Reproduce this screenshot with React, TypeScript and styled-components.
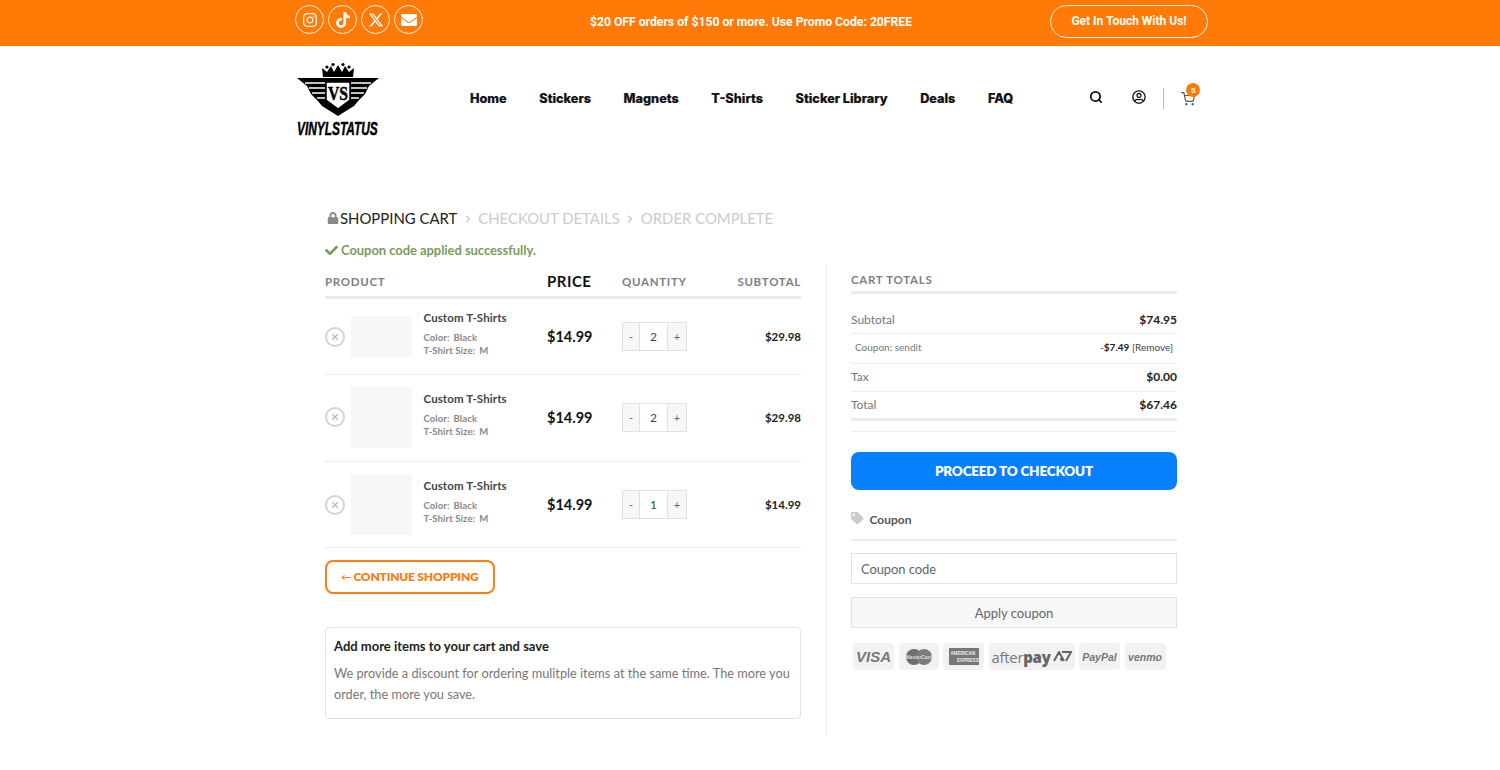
import styled, { createGlobalStyle } from "styled-components";
import { FaInstagram, FaTiktok, FaEnvelope, FaLock, FaCheck, FaTag, FaRegUserCircle } from "react-icons/fa";
import { FaXTwitter } from "react-icons/fa6";
import { FiShoppingCart, FiX, FiChevronRight } from "react-icons/fi";
import { Search } from "lucide-react";

const GlobalStyle = createGlobalStyle`
  html, body { margin: 0; padding: 0; background: #fff; }
  body { font-family: Lato, "Liberation Sans", sans-serif; color: #777; }
  * { box-sizing: border-box; }
`;

const TopBar = styled.div`
  height: 46px;
  background: #ff7a07;
`;
const TopInner = styled.div`
  width: 913px;
  margin-left: 295px;
  height: 38px;
  padding-top: 5px;
  display: flex;
  align-items: flex-start;
  justify-content: space-between;
`;
const Socials = styled.div`
  display: flex;
  gap: 4px;
`;
const Social = styled.a`
  width: 29px;
  height: 29px;
  border: 1px solid #fff0e2;
  border-radius: 50%;
  color: #fff;
  font-size: 16px;
  display: flex;
  align-items: center;
  justify-content: center;
`;
const Promo = styled.div`
  font-family: Roboto, sans-serif;
  font-weight: 700;
  font-size: 12.2px;
  color: #fff;
  line-height: 34px;
  margin-left: 29px;
`;
const TouchButton = styled.a`
  width: 158px;
  height: 33px;
  border: 1px solid #fff0e2;
  border-radius: 17px;
  color: #fff;
  font-family: Roboto, sans-serif;
  font-weight: 700;
  font-size: 12px;
  padding-bottom: 1px;
  display: flex;
  align-items: center;
  justify-content: center;
`;

const Header = styled.header`
  width: 913px;
  margin-left: 295px;
  height: 104px;
  padding-top: 16px;
  display: flex;
  align-items: flex-start;
`;
const LogoWrap = styled.div`
  width: 84px;
  height: 74px;
  margin-left: 2px;
`;
const LogoMark = styled.svg`
  display: block;
  margin-bottom: 1px;
`;
const LogoText = styled.div`
  font-family: "Liberation Sans", sans-serif;
  font-size: 18px;
  font-weight: 700;
  font-style: italic;
  line-height: 15px;
  color: #000;
  -webkit-text-stroke: 0.5px #000;
  white-space: nowrap;
  transform: scaleX(0.66);
  transform-origin: left center;
`;
const Nav = styled.nav`
  display: flex;
  gap: 32.5px;
  margin-left: 89px;
  height: 72px;
  align-items: center;
`;
const NavLink = styled.a`
  font-family: Inter, sans-serif;
  font-weight: 800;
  font-size: 12.7px;
  color: #111;
  -webkit-text-stroke: 0.2px #111;
`;
const HeaderIcons = styled.div`
  margin-left: 76px;
  height: 70px;
  display: flex;
  align-items: center;
  color: #111;
`;
const IconSlot = styled.span<{ $w: number }>`
  width: ${(p) => p.$w}px;
  display: flex;
  font-size: 14px;
`;
const Divider = styled.span`
  width: 1px;
  height: 21px;
  background: #bbb;
  margin: 3px 17px 0 15px;
`;
const CartSlot = styled.span`
  position: relative;
  display: flex;
  color: #555;
  font-size: 14px;
  margin-top: 4px;
`;
const Badge = styled.span`
  position: absolute;
  top: -9px;
  left: 5px;
  width: 14px;
  height: 14px;
  border-radius: 50%;
  background: #ff7a07;
  color: #fff;
  font-family: Roboto, sans-serif;
  font-size: 8px;
  font-weight: 700;
  display: flex;
  align-items: center;
  justify-content: center;
`;

const Main = styled.main`
  margin-left: 325px;
  width: 852px;
  padding-top: 58px;
`;
const Steps = styled.div`
  display: flex;
  align-items: center;
  height: 20px;
  font-size: 14.9px;
  color: #ccc;
`;
const LockIcon = styled.span`
  display: flex;
  color: #888;
  font-size: 12px;
  margin: 0 1px 0 2px;
`;
const ActiveStep = styled.span`
  color: #222;
`;
const StepArrow = styled.span`
  display: flex;
  color: #999;
  font-size: 12px;
  margin: 2px 4.5px 0 4.5px;
`;
const Success = styled.div`
  margin-top: 13px;
  height: 18px;
  display: flex;
  align-items: center;
  gap: 3px;
  font-size: 13px;
  font-weight: 700;
  letter-spacing: -0.06px;
  color: #7a9c59;
`;
const Columns = styled.div`
  display: flex;
  margin-top: 6px;
`;
const LeftCol = styled.div`
  width: 476px;
  flex-shrink: 0;
`;
const RightCol = styled.aside`
  width: 351px;
  margin-left: 25px;
  padding: 0 0 0 24px;
  border-left: 1px solid #ececec;
  height: 470px;
`;

const cartGrid = "26px 72.5px 123.5px 75px 65px 1fr";
const HeadRow = styled.div`
  display: grid;
  grid-template-columns: ${cartGrid};
  align-items: center;
  height: 34px;
  border-bottom: 3px solid #ececec;
  padding-top: 2px;
`;
const HeadCell = styled.div<{ $span?: number; $right?: boolean }>`
  grid-column: span ${(p) => p.$span || 1};
  text-align: ${(p) => (p.$right ? "right" : "left")};
  font-size: 11.5px;
  font-weight: 700;
  letter-spacing: 0.7px;
  color: #808080;
`;
const PriceHead = styled.div`
  font-size: 15px;
  font-weight: 700;
  letter-spacing: 0.5px;
  color: #111;
  padding-bottom: 2px;
`;
const Row = styled.div<{ $h: number; $pb: number }>`
  display: grid;
  grid-template-columns: ${cartGrid};
  align-items: center;
  height: ${(p) => p.$h}px;
  padding-bottom: ${(p) => p.$pb}px;
  border-bottom: 1px solid #ececec;
`;
const RemoveBtn = styled.span`
  width: 20px;
  height: 20px;
  border: 2px solid #d4d4d4;
  border-radius: 50%;
  color: #bbb;
  font-size: 10px;
  display: flex;
  align-items: center;
  justify-content: center;
`;
const Thumb = styled.div<{ $h: number }>`
  width: 61px;
  height: ${(p) => p.$h}px;
  background: #f7f7f7;
`;
const ItemInfo = styled.div`
  padding-bottom: 5px;
`;
const ItemName = styled.div`
  font-size: 11.5px;
  font-weight: 700;
  color: #444;
  line-height: 14px;
  margin-bottom: 6px;
  letter-spacing: 0.1px;
`;
const Variation = styled.div`
  font-size: 9.5px;
  font-weight: 700;
  color: #888;
  line-height: 13px;
  letter-spacing: 0.1px;
`;
const VariationLabel = styled.span`
  margin-right: 4px;
`;
const Price = styled.div`
  font-size: 14.5px;
  font-weight: 700;
  color: #111;
`;
const Qty = styled.div`
  display: flex;
  width: 65px;
  height: 29px;
  border: 1px solid #e2e2e2;
`;
const QtyBtn = styled.span<{ $w: number }>`
  width: ${(p) => p.$w}px;
  background: #f7f7f7;
  color: #666;
  font-size: 11px;
  display: flex;
  align-items: center;
  justify-content: center;
`;
const QtyValue = styled.span`
  flex: 1;
  background: #fff;
  border-left: 1px solid #e2e2e2;
  border-right: 1px solid #e2e2e2;
  color: #444;
  font-size: 12px;
  display: flex;
  align-items: center;
  justify-content: center;
`;
const Subtotal = styled.div`
  text-align: right;
  font-size: 11.5px;
  font-weight: 700;
  color: #222;
`;
const ContinueBtn = styled.a`
  margin-top: 12px;
  width: 170px;
  height: 34px;
  border: 2px solid #f97f16;
  border-radius: 8px;
  color: #f97f16;
  font-size: 12px;
  font-weight: 800;
  letter-spacing: -0.2px;
  padding-bottom: 1px;
  display: flex;
  align-items: center;
  justify-content: center;
`;
const BackArrow = styled.span`
  font-weight: 400;
  font-family: "DejaVu Sans", sans-serif;
  margin-right: 2px;
`;
const InfoBox = styled.div`
  margin-top: 33px;
  height: 92px;
  border: 1px solid #e3e3e3;
  border-radius: 4px;
  padding: 9px 8px;
`;
const InfoTitle = styled.div`
  font-size: 13px;
  font-weight: 700;
  color: #222;
  line-height: 18px;
  margin-bottom: 8px;
`;
const InfoText = styled.div`
  font-size: 12.75px;
  color: #777;
  line-height: 21px;
`;

const TotalsTitle = styled.div`
  height: 29px;
  padding-top: 8px;
  border-bottom: 3px solid #ececec;
  font-size: 11.5px;
  font-weight: 700;
  letter-spacing: 0.7px;
  color: #808080;
`;
const TotalRow = styled.div<{ $h: number; $thick?: boolean }>`
  height: ${(p) => p.$h}px;
  padding-bottom: 2px;
  display: flex;
  align-items: center;
  justify-content: space-between;
  border-bottom: ${(p) => (p.$thick ? "3px" : "1px")} solid #ececec;
  font-size: 12px;
  color: #777;
`;
const FirstRow = styled(TotalRow)`
  padding-top: 12px;
  padding-bottom: 0;
`;
const TotalValue = styled.span`
  font-weight: 700;
  color: #222;
`;
const CouponRow = styled(TotalRow)`
  font-size: 10px;
  padding: 0 4px 4px;
`;
const CouponValue = styled.span`
  color: #444;
`;
const ThinRule = styled.div`
  height: 11px;
  border-bottom: 1px solid #ececec;
`;
const CheckoutBtn = styled.a`
  margin-top: 20px;
  height: 38px;
  background: #0780fe;
  border-radius: 8px;
  color: #fff;
  font-size: 13.5px;
  font-weight: 800;
  letter-spacing: -0.2px;
  display: flex;
  align-items: center;
  justify-content: center;
`;
const CouponHead = styled.div`
  margin-top: 12px;
  height: 39px;
  padding-bottom: 2px;
  display: flex;
  align-items: center;
  gap: 6px;
  border-bottom: 2px solid #ececec;
  font-size: 12px;
  font-weight: 700;
  color: #555;
`;
const TagIcon = styled.span`
  display: flex;
  color: #ccc;
  font-size: 12.5px;
  margin-top: -3px;
`;
const CouponInput = styled.div`
  margin-top: 12px;
  height: 31px;
  border: 1px solid #e2e2e2;
  padding-left: 9px;
  font-size: 13px;
  letter-spacing: -0.1px;
  color: #666;
  display: flex;
  align-items: center;
`;
const ApplyBtn = styled.div`
  margin-top: 13px;
  height: 31px;
  border: 1px solid #e2e2e2;
  background: #f7f7f7;
  font-size: 13px;
  color: #666;
  display: flex;
  align-items: center;
  justify-content: center;
`;
const Payments = styled.div`
  margin: 15px 0 0 2px;
  display: flex;
  gap: 4.5px;
`;
const Chip = styled.div<{ $w: number }>`
  width: ${(p) => p.$w}px;
  height: 27px;
  background: #f2f2f2;
  border-radius: 4px;
  color: #777;
  display: flex;
  align-items: center;
  justify-content: center;
`;
const VisaText = styled.span`
  font-family: "Liberation Sans", sans-serif;
  font-size: 15px;
  font-weight: 700;
  font-style: italic;
`;
const AfterpayText = styled.span`
  font-family: "Open Sans", sans-serif;
  font-size: 15px;
  letter-spacing: -0.3px;
  color: #777;
  margin-right: 2px;
`;
const AfterpayBold = styled.b`
  font-weight: 800;
  color: #666;
`;
const SmallItalic = styled.span`
  font-family: "Liberation Sans", sans-serif;
  font-size: 10.5px;
  font-weight: 700;
  font-style: italic;
`;

function Logo() {
  return (
    <>
      <LogoMark width="84" height="59" viewBox="0 0 84 59">
        <path d="M26 15 L25 6 L30 10 L34 4 L37 10 L41 3 L45 10 L48 4 L52 10 L57 6 L56 15 Z" fill="#000" />
        <circle cx="30" cy="5" r="1.6" fill="#000" />
        <circle cx="36" cy="2.5" r="1.6" fill="#000" />
        <circle cx="46" cy="2.5" r="1.6" fill="#000" />
        <circle cx="52" cy="5" r="1.6" fill="#000" />
        <path d="M0 16 H82 L72 24 L68 32 L62 38 L57 44 L41 54 L25 44 L20 38 L14 32 L10 24 Z" fill="#000" />
        <path d="M8 21 H28 M12 26 H28 M15 31 H28 M20 36 H28 M54 21 H74 M54 26 H70 M54 31 H67 M54 36 H62" stroke="#fff" strokeWidth="1.3" />
        <path d="M29 20 H53 V38 L41 47 L29 38 Z" fill="#fff" stroke="#000" strokeWidth="1.5" />
        <text x="41" y="38" textAnchor="middle" fontFamily="Liberation Serif" fontWeight="700" fontSize="19" textLength="20" lengthAdjust="spacingAndGlyphs" stroke="#000" strokeWidth="0.5" fill="#000">VS</text>
      </LogoMark>
      <LogoText>VINYLSTATUS</LogoText>
    </>
  );
}

const items = [
  { qty: 2, sub: "$29.98", h: 41, row: 76, pb: 0 },
  { qty: 2, sub: "$29.98", h: 61, row: 87, pb: 2 },
  { qty: 1, sub: "$14.99", h: 61, row: 86, pb: 0 },
];

export default function App() {
  return (
    <>
      <GlobalStyle />
      <TopBar>
        <TopInner>
          <Socials>
            <Social><FaInstagram /></Social>
            <Social><FaTiktok /></Social>
            <Social><FaXTwitter /></Social>
            <Social><FaEnvelope /></Social>
          </Socials>
          <Promo>$20 OFF orders of $150 or more. Use Promo Code: 20FREE</Promo>
          <TouchButton>Get In Touch With Us!</TouchButton>
        </TopInner>
      </TopBar>
      <Header>
        <LogoWrap><Logo /></LogoWrap>
        <Nav>
          <NavLink>Home</NavLink>
          <NavLink>Stickers</NavLink>
          <NavLink>Magnets</NavLink>
          <NavLink>T-Shirts</NavLink>
          <NavLink>Sticker Library</NavLink>
          <NavLink>Deals</NavLink>
          <NavLink>FAQ</NavLink>
        </Nav>
        <HeaderIcons>
          <IconSlot $w={43}><Search size={14} strokeWidth={3} /></IconSlot>
          <IconSlot $w={16}><FaRegUserCircle /></IconSlot>
          <Divider />
          <CartSlot>
            <FiShoppingCart />
            <Badge>5</Badge>
          </CartSlot>
        </HeaderIcons>
      </Header>
      <Main>
        <Steps>
          <LockIcon><FaLock /></LockIcon>
          <ActiveStep>SHOPPING CART</ActiveStep>
          <StepArrow><FiChevronRight /></StepArrow>
          CHECKOUT DETAILS
          <StepArrow><FiChevronRight /></StepArrow>
          ORDER COMPLETE
        </Steps>
        <Success><FaCheck />Coupon code applied successfully.</Success>
        <Columns>
          <LeftCol>
            <HeadRow>
              <HeadCell $span={3}>PRODUCT</HeadCell>
              <PriceHead>PRICE</PriceHead>
              <HeadCell>QUANTITY</HeadCell>
              <HeadCell $right>SUBTOTAL</HeadCell>
            </HeadRow>
            {items.map((item, index) => (
              <Row key={index} $h={item.row} $pb={item.pb}>
                <RemoveBtn><FiX strokeWidth={3} /></RemoveBtn>
                <Thumb $h={item.h} />
                <ItemInfo>
                  <ItemName>Custom T-Shirts</ItemName>
                  <Variation><VariationLabel>Color:</VariationLabel>Black</Variation>
                  <Variation><VariationLabel>T-Shirt Size:</VariationLabel>M</Variation>
                </ItemInfo>
                <Price>$14.99</Price>
                <Qty>
                  <QtyBtn $w={16}>-</QtyBtn>
                  <QtyValue>{item.qty}</QtyValue>
                  <QtyBtn $w={18}>+</QtyBtn>
                </Qty>
                <Subtotal>{item.sub}</Subtotal>
              </Row>
            ))}
            <ContinueBtn><BackArrow>←</BackArrow>CONTINUE SHOPPING</ContinueBtn>
            <InfoBox>
              <InfoTitle>Add more items to your cart and save</InfoTitle>
              <InfoText>We provide a discount for ordering mulitple items at the same time. The more you order, the more you save.</InfoText>
            </InfoBox>
          </LeftCol>
          <RightCol>
            <TotalsTitle>CART TOTALS</TotalsTitle>
            <FirstRow $h={40}>Subtotal<TotalValue>$74.95</TotalValue></FirstRow>
            <CouponRow $h={30}>Coupon: sendit<CouponValue>-<TotalValue>$7.49</TotalValue> [Remove]</CouponValue></CouponRow>
            <TotalRow $h={28}>Tax<TotalValue>$0.00</TotalValue></TotalRow>
            <TotalRow $h={29} $thick>Total<TotalValue>$67.46</TotalValue></TotalRow>
            <ThinRule />
            <CheckoutBtn>PROCEED TO CHECKOUT</CheckoutBtn>
            <CouponHead><TagIcon><FaTag /></TagIcon>Coupon</CouponHead>
            <CouponInput>Coupon code</CouponInput>
            <ApplyBtn>Apply coupon</ApplyBtn>
            <Payments>
              <Chip $w={41}><VisaText>VISA</VisaText></Chip>
              <Chip $w={40}>
                <svg width="28" height="16" viewBox="0 0 28 16">
                  <circle cx="9" cy="8" r="8" fill="#6f6f6f" />
                  <circle cx="19" cy="8" r="8" fill="#7c7c7c" />
                  <text x="14" y="10" textAnchor="middle" fontFamily="Liberation Sans" fontSize="4.8" fontWeight="700" fill="#ddd">MasterCard</text>
                </svg>
              </Chip>
              <Chip $w={41}>
                <svg width="30" height="17" viewBox="0 0 30 17">
                  <rect width="30" height="17" fill="#777" />
                  <text x="1.5" y="7" fontFamily="Liberation Sans" fontSize="4.6" fontWeight="700" fill="#eee">AMERICAN</text>
                  <text x="8" y="14" fontFamily="Liberation Sans" fontSize="4.6" fontWeight="700" fill="#eee">EXPRESS</text>
                </svg>
              </Chip>
              <Chip $w={86}>
                <AfterpayText>after<AfterpayBold>pay</AfterpayBold></AfterpayText>
                <svg width="19" height="11" viewBox="0 0 19 11">
                  <path d="M1 10 L6 1 L11 10 M7.5 7 L9 10 M9 1 H18 L13 10" fill="none" stroke="#666" strokeWidth="2" />
                </svg>
              </Chip>
              <Chip $w={41}><SmallItalic>PayPal</SmallItalic></Chip>
              <Chip $w={41}><SmallItalic>venmo</SmallItalic></Chip>
            </Payments>
          </RightCol>
        </Columns>
      </Main>
    </>
  );
}
